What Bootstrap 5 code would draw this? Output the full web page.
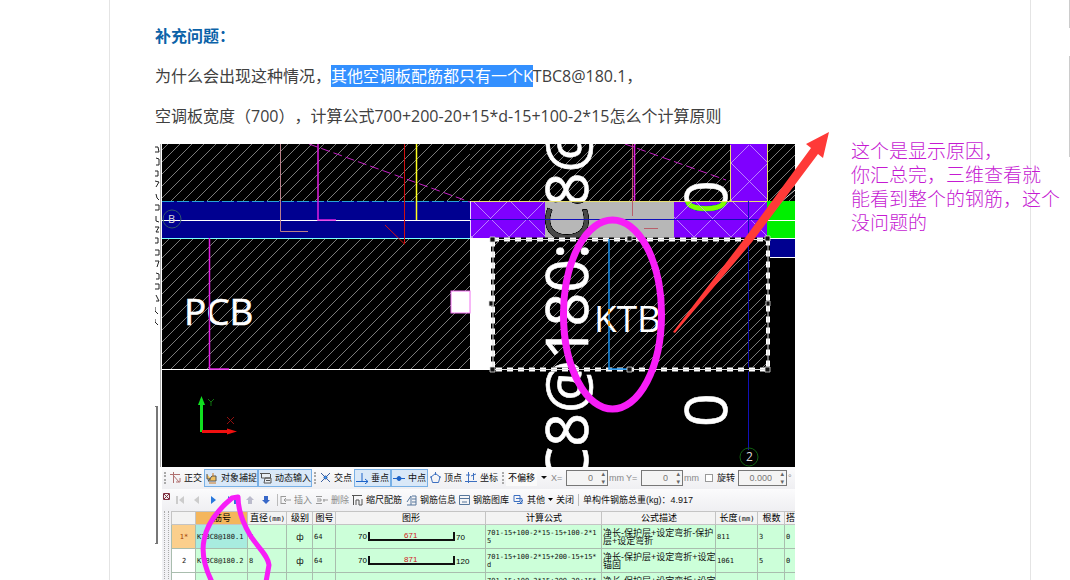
<!DOCTYPE html>
<html lang="zh-CN">
<head>
<meta charset="utf-8">
<meta name="viewport" content="width=device-width, initial-scale=1">
<title>补充问题</title>
<link rel="stylesheet" href="https://cdn.jsdelivr.net/npm/bootstrap@5.3.0/dist/css/bootstrap.min.css">
<style>
  body { font-family: "Open Sans", "Noto Sans CJK SC", sans-serif; font-size: 16px; line-height: 40px; color: #404040; background: #fff; text-spacing-trim: space-all; font-feature-settings: "chws" 0, "halt" 0; }
  .page-shell { height: 100vh; }
  .gutter { width: 109px; }
  .sheet { border: solid #e4e4e4; border-width: 0 1px; padding: 16px 0 0 45px; min-width: 0; }
  .ask-title { font-size: 16px; line-height: 40px; font-weight: 700; color: #0b62a8; }
  .picked { background: #3390ff; color: #fff; }
  .rail { width: 39px; gap: 28px; }
  .rail div { border-right: 1px solid #ccc; height: 28px; }
  .rail div + div { height: 101px; }

  .shot { width: 640px; margin-top: 8px; line-height: 12px; color: #111; font-size: 9px; font-family: "Liberation Sans", "Noto Sans CJK SC", sans-serif; }
  .shot svg { display: block; }
  .cad { width: 100%; font-family: "Open Sans", sans-serif; }
  .blend { mix-blend-mode: difference; }
  .cad-group { isolation: isolate; }
  .marks { left: 0; top: 0; width: 100%; height: auto; overflow: visible; pointer-events: none; }
  .note { left: 696px; top: -6px; width: 215px; font: 300 19px/24px "Noto Sans CJK SC", sans-serif; color: #c51ad2; }

  .panel { margin-left: 7px; background: #f1f1f4; }
  .edge { left: 0; top: -61px; width: 3px; height: 138px; border: solid #777; border-width: 1px 2px 1px 0; }
  .bar { display: grid; align-items: center; height: 22px; white-space: nowrap; background: linear-gradient(#fbfbfc, #efeff2); }
  .bar-snap { grid-template-columns: 6px 36px 54px 54px 6px 36px 37px 37px 35px 37px 6px 44px 16px 42px 17px 16px 42px 18px 37px 49px 8px; }
  .bar-edit { grid-template-columns: 10px 16px 16px 18px 20px 15px 18px 39px 36px 54px 53px 54px 43px 24px 1fr; }
  .grip { height: 12px; width: 2px; margin-left: 2px; border-left: 2px dotted #aaa; }
  .tool { display: flex; align-items: center; gap: 3px; height: 18px; padding: 0 1px; border: 1px solid transparent; background: none; font: inherit; color: #111; }
  .tool svg { flex: none; }
  .tool.on { background: #d9e8f8; border-color: #78b0e6; }
  .tool.off { color: #8a8a8a; }
  .tool.nav-step { justify-content: center; }
  .split { border-left: 1px solid #bbb; }
  .pick { appearance: none; border: 0; background: #fafafa; font: inherit; padding: 0 2px; width: 31px; height: 16px; }
  .num { appearance: textfield; width: 100%; height: 16px; border: 1px solid #777; background: #f4f4f4; color: #777; font: inherit; padding: 0 14px 0 0; text-align: right; }
  .num-box::after { content: "▴\A▾"; white-space: pre; position: absolute; right: 3px; top: 0; font: 7px/8px "DejaVu Sans", sans-serif; color: #666; }
  .unit { color: #888; padding-left: 1px; }
  .tick { appearance: none; width: 8px; height: 8px; border: 1px solid #999; background: #fff; margin: 0; }

  .grid-wrap { padding-left: 9px; overflow: hidden; height: 72px; position: relative; }
  .grid-wrap::before { content: ""; position: absolute; left: 2px; top: 0; bottom: 0; width: 5px; border: dotted #aaa; border-width: 0 1px; }
  .bars { table-layout: fixed; width: 624px; border-collapse: collapse; line-height: 8px; white-space: nowrap; }
  .bars th, .bars td { border: 1px solid #a9bdae; padding: 0 0 0 1px; vertical-align: middle; }
  .bars thead th { height: 13px; background: #f3f3f3; font-weight: 400; text-align: center; border-color: #c4c4c4; color: #000; }
  .bars thead .hot { background: #f4b65c; }
  .bars tbody td { height: 24px; background: #ccffd9; }
  .bars tbody th { background: #fff; font: 7px/8px "DejaVu Sans Mono", monospace; text-align: center; }
  .bars tbody .cur { background: #fbcf8c; color: #a33b00; }
  .bars tbody .cell-on { background: #a8ecdf; }
  .bars .code, .mm { font-family: "DejaVu Sans Mono", monospace; font-size: 7px; }
</style>
</head>
<body>
<div class="page-shell d-flex overflow-hidden">
  <div class="gutter flex-shrink-0"></div>
  <main class="sheet flex-grow-1">
    <h1 class="ask-title m-0">补充问题：</h1>
    <p class="m-0">为什么会出现这种情况，<span class="picked">其他空调板配筋都只有一个K</span>TBC8@180.1，</p>
    <p class="m-0">空调板宽度（700），计算公式700+200-20+15*d-15+100-2*15怎么个计算原则</p>

    <figure class="shot position-relative mb-0">
      <svg class="cad" viewBox="155 144 640 323" role="img" aria-label="CAD">
        <defs>
          <pattern id="hatchL" width="12" height="12" patternUnits="userSpaceOnUse"><path d="M-2 14L14 -2M-2 2L2 -2M10 14L14 10" stroke="#999" stroke-width=".8"/></pattern>
          <pattern id="hatchR" width="10" height="10" patternUnits="userSpaceOnUse"><path d="M-2 12L12 -2M-2 2L2 -2M8 12L12 8" stroke="#999" stroke-width=".8"/></pattern>
          <pattern id="cross" x="731" y="163" width="37" height="37" patternUnits="userSpaceOnUse"><path d="M0 0L37 37M37 0L0 37" stroke="#c9a0ff" stroke-width=".8"/></pattern>
        </defs>
        <!-- ruler at the left edge -->
        <path d="M155 147h3l1 5h-4M156 158l3 1v6h-3M155 171h3v5h-3M155 181l4 1-3 5M156 194l1 4 2 2M155 205h4v5h-4M156 216v5l3 1M155 227h4l-3 5h3M155 238h3v5h-3M155 250h4v5h-4M155 261h4l-2 6M156 273l3 1v5h-3M155 284h4v5h-4M156 295l3 6h-3M155 307v4l3 3M155 319v3l3 3" fill="none" stroke="#222"/>
        <path d="M160.5 144V467" stroke="#aaa"/>
        <g class="cad-group">
          <rect x="162" y="144" width="633" height="323" fill="#000"/>
          <rect x="162" y="144" width="308" height="225" fill="url(#hatchL)"/>
          <rect x="470" y="144" width="325" height="57" fill="url(#hatchR)"/>
          <rect x="493" y="239" width="274" height="130" fill="url(#hatchR)"/>
          <rect x="470" y="201" width="297" height="38" fill="#000"/>
          <g font-size="59" fill="#fff" stroke="#fff" stroke-width=".6">
            <text transform="translate(588 484) rotate(-90)">C8@180:C8@</text>
            <text transform="translate(727 427) rotate(-90)">0</text>
            <text transform="translate(727 214) rotate(-90)">0</text>
          </g>
          <rect class="blend" x="545" y="201" width="129" height="37" fill="#b7b7b7"/>
          <path class="blend" d="M470 201h75v37h-75zM674 201h93v37h-93z" fill="#7f00ff"/>
          <rect x="730" y="144" width="37" height="57" fill="#7f00ff"/>
        </g>
        <path d="M470 201h75v37h-75zM674 201h93v37h-93zM730 145h37v56h-37z" fill="url(#cross)"/>
        <rect x="162" y="201" width="308" height="37" fill="#000090"/>
        <path d="M162 201.500H470" stroke="#27a3d8" stroke-dasharray="12 3"/>
        <path d="M162 220.500H470" stroke="#fff"/>
        <path d="M162 238.500H470" stroke="#7ff"/>
        <path d="M470 201.500H767M730.500 145V201M767.500 144V201" stroke="#e8e070"/>
        <path d="M470.500 201V238" stroke="#e8d8ff"/>
        <rect x="470" y="238" width="23" height="131" fill="#fff"/>
        <path d="M767 201h28v37h-28z" fill="#00f000"/>
        <path d="M767 239h28v18h-28z" fill="#000090"/>
        <path d="M767 220.500h28M767 257.500h28M767 238.500h28M162 369.500H768" stroke="#fff"/>
        <path d="M280.500 144V231.500H308" fill="none" stroke="#b9808a"/>
        <path d="M318 144V220H336M209.500 238V369H229M634.500 144V201" fill="none" stroke="#e01ee0" stroke-width="1.500"/>
        <path d="M632.500 144V216M644 228.500H658" stroke="#b95f6a"/>
        <path d="M309 144L470 202M625 144L726 180" stroke="#c41ec4" stroke-dasharray="9 4"/>
        <path d="M404.500 144V244L385 225" fill="none" stroke="#d01010"/>
        <path d="M416.500 144V220" stroke="#ffff20" stroke-width="1.500"/>
        <path d="M470 219.500H767M748.500 201V450" stroke="#1010b8"/>
        <path d="M781 202L795 190" stroke="#ddd"/>
        <rect x="451" y="291" width="19" height="22" fill="#fff" stroke="#f070f0"/>
        <circle cx="172" cy="219" r="9" fill="none" stroke="#31576a"/>
        <text x="168" y="223" font-size="11" fill="#ddd">B</text>
        <circle cx="749" cy="457" r="9" fill="none" stroke="#106010"/>
        <text x="746" y="461" font-size="12" fill="#ddd">2</text>
        <text x="184" y="325" font-size="37" fill="#fff" stroke="#fff" stroke-width=".5">PCB</text>
        <path d="M209.500 300V325" stroke="#c41ec4"/>
        <path d="M493 239.500H768" stroke="#e8e070"/>
        <path d="M493 239.500H768V369.500H493Z" fill="none" stroke="#000" stroke-width="4"/>
        <path d="M493 239.500H768V369.500H493Z" fill="none" stroke="#fff" stroke-width="4" stroke-dasharray="6 5"/>
        <path d="M493 239.500H768V369.500H493Z" fill="none" stroke="#ddd"/>
        <path d="M609 239V369H627" fill="none" stroke="#1590f0" stroke-width="1.500"/>
        <text x="594" y="332" font-size="37" fill="#fff">KTB</text>
        <path d="M609 309v5M609 321v5" stroke="#f0a020" stroke-width="2"/>
        <path d="M490 237h5v5h-5zM627 236h5v5h-5zM765 236h5v5h-5zM489 301h4v5h-4zM766 301h4v5h-4zM490 367h5v5h-5zM627 367h5v5h-5zM765 367h5v5h-5z" fill="#111" stroke="#ddd" stroke-width=".8"/>
        <!-- axis tripod -->
        <path d="M201.500 432V402" stroke="#10e020" stroke-width="3"/><path d="M198 405l3.500-9 3.500 9z" fill="#10e020"/>
        <path d="M202 431.500H229" stroke="#f01010" stroke-width="3"/><path d="M227 428.500l10 3-10 3z" fill="#f01010"/>
        <path d="M208 399l3 3 3-3M211 402v4" stroke="#107010" fill="none"/>
        <path d="M227 417l7 7M234 417l-7 7" stroke="#901010"/>
      </svg>

      <div class="position-relative">
      <div class="edge position-absolute"></div>
      <div class="panel">
        <div class="bar bar-snap">
          <span class="grip"></span>
          <button class="tool" type="button"><svg width="11" height="12" fill="none" stroke="#b07070"><path d="M0 2.500h10M3.500 0v11M3 3l6 7M6 10h4V6"/></svg>正交</button>
          <button class="tool on" type="button"><svg width="12" height="12" fill="none" stroke="#555"><path d="M1 2v5h4M2 9h8V4H6z" fill="#f0c060"/><path d="M7 1v3M3 11h7" stroke="#d07820"/></svg>对象捕捉</button>
          <button class="tool on" type="button"><svg width="12" height="12" fill="none" stroke="#555"><path d="M0 1.500h10M1.500 1v5h9V2M5 6h6v5H4z" fill="#e8eef4"/><path d="M6 8.500h4"/></svg>动态输入</button>
          <span class="grip"></span>
          <button class="tool" type="button"><svg width="11" height="12" stroke="#3b5fa0" fill="none"><path d="M1 1l9 9M10 1L1 10"/><circle cx="5.500" cy="5.500" r="1.500" fill="#39f"/></svg>交点</button>
          <button class="tool on" type="button"><svg width="12" height="12" stroke="#1d63c8" fill="none"><path d="M6 1v8M0 9.500h12M9 7l3 2.500L9 12"/></svg>垂点</button>
          <button class="tool on" type="button"><svg width="12" height="12" stroke="#1d63c8" fill="#1d63c8"><path d="M0 6.500h12"/><circle cx="6" cy="6.500" r="2"/></svg>中点</button>
          <button class="tool" type="button"><svg width="11" height="12" stroke="#3c6fc0" fill="none"><path d="M5.500 1.500L10 5 8.500 10.500h-6L1 5z"/><path d="M5.500 0v3M0 5h2M9 5h2"/></svg>顶点</button>
          <button class="tool" type="button"><svg width="12" height="12" stroke="#3c6fc0" fill="none"><path d="M3.500 0v11M0 9.500h12M8.500 1v7M6 4l5-2M1 3h4"/></svg>坐标</button>
          <span class="grip"></span>
          <span class="d-flex align-items-center"><select class="pick" aria-label="偏移"><option>不偏移</option></select><svg width="12" height="6"><path d="M4 1h6L7 4z" fill="#111"/></svg></span>
          <label class="unit" for="dx">X=</label>
          <span class="num-box position-relative"><input class="num d-block" id="dx" type="text" value="0"></span>
          <span class="unit">mm</span>
          <label class="unit" for="dy">Y=</label>
          <span class="num-box position-relative"><input class="num d-block" id="dy" type="text" value="0"></span>
          <span class="unit">mm</span>
          <label class="d-flex align-items-center gap-1 ps-1"><input class="tick" type="checkbox">旋转</label>
          <span class="num-box position-relative"><input class="num d-block" type="text" value="0.000" aria-label="旋转"></span>
          <span class="unit">°</span>
        </div>
        <div class="bar bar-edit">
          <svg width="8" height="9" class="mb-2"><path d="M1.500 1.500h6v6h-6zM2 2l5 5M7 2L2 7" stroke="#803040" fill="#eee"/></svg>
          <button class="tool off nav-step" type="button" aria-label="首行"><svg width="8" height="8" fill="#ccc"><path d="M0 0h2v8H0zM8 0v8L3 4z"/></svg></button>
          <button class="tool off nav-step" type="button" aria-label="上一行"><svg width="5" height="8" fill="#ccc"><path d="M5 0v8L0 4z"/></svg></button>
          <button class="tool nav-step" type="button" aria-label="下一行"><svg width="5" height="8" fill="#2878dc"><path d="M0 0v8l5-4z"/></svg></button>
          <button class="tool nav-step" type="button" aria-label="末行"><svg width="8" height="8" fill="#2878dc"><path d="M0 0v8l5-4zM6 0h2v8H6z"/></svg></button>
          <button class="tool off nav-step" type="button" aria-label="上移"><svg width="8" height="8" fill="#bbc"><path d="M4 0l4 4H6v4H2V4H0z"/></svg></button>
          <button class="tool nav-step" type="button" aria-label="下移"><svg width="8" height="8" fill="#3868c8"><path d="M4 8l4-4H6V0H2v4H0z"/></svg></button>
          <button class="tool off" type="button"><svg width="14" height="12" fill="none" stroke="#999"><path d="M.5 0v12" stroke="#bbb"/><path d="M4 2.500h5M4 9.500h5M4 2v8M7 6h7M9 4L7 6l2 2"/></svg>插入</button>
          <button class="tool off" type="button"><svg width="12" height="12" fill="none" stroke="#999"><path d="M0 2.500h6M0 9.500h6M1 5h4v2H1M7 6h5M8 5v3"/></svg>删除</button>
          <button class="tool" type="button"><svg width="11" height="12" fill="none" stroke="#555"><path d="M0 1.500h10M1.500 1v10M4 11V6h3v5h3V5"/></svg>缩尺配筋</button>
          <button class="tool" type="button"><svg width="11" height="12" fill="none" stroke="#57779c"><path d="M1 8l4-6v9M6 2h4v9H1M6 5h4M6 8h4"/></svg>钢筋信息</button>
          <button class="tool" type="button"><svg width="11" height="12" fill="none" stroke="#57779c"><path d="M.5 1.500h10v9H.5zM1 4.500h9M3 8h5"/></svg>钢筋图库</button>
          <button class="tool" type="button"><svg width="11" height="12" fill="none" stroke="#3c6fc0"><path d="M1 1.500h6v6H1zM3 4.500h6v5H4M7 9l3-3"/></svg>其他<svg width="5" height="4"><path d="M0 0h5L2.500 3z"/></svg></button>
          <button class="tool" type="button">关闭</button>
          <span class="split ps-1">单构件钢筋总重(kg)：4.917</span>
        </div>
        <div class="grid-wrap">
          <table class="bars">
            <colgroup><col width="24"><col width="52"><col width="39"><col width="26"><col width="23"><col width="150"><col width="116"><col width="114"><col width="42"><col width="27"><col width="11"></colgroup>
            <thead><tr><th></th><th class="hot">筋号</th><th>直径<span class="mm">(mm)</span></th><th>级别</th><th>图号</th><th>图形</th><th>计算公式</th><th>公式描述</th><th>长度<span class="mm">(mm)</span></th><th>根数</th><th>搭</th></tr></thead>
            <tbody>
              <tr><th class="cur">1*</th><td class="code cell-on">KTBC8@180.1</td><td class="code">8</td><td class="text-center">ф</td><td class="code">64</td>
                <td><svg width="146" height="16"><path d="M32 3v8h85V3" fill="none" stroke="#111" stroke-width="2"/><g font-size="8"><text x="21" y="10">70</text><text x="119" y="11">70</text><text x="67" y="9" fill="#d02020">671</text></g></svg></td>
                <td class="code">701-15+100-2*15-15+100-2*1<br>5</td><td>净长-保护层+设定弯折-保护<br>层+设定弯折</td><td class="code">811</td><td class="code">3</td><td class="code">0</td></tr>
              <tr><th>2</th><td class="code">KTBC8@180.2</td><td class="code">8</td><td class="text-center">ф</td><td class="code">64</td>
                <td><svg width="146" height="16"><path d="M32 3v8h85V3" fill="none" stroke="#111" stroke-width="2"/><g font-size="8"><text x="21" y="10">70</text><text x="119" y="11">120</text><text x="67" y="9" fill="#d02020">871</text></g></svg></td>
                <td class="code">701-15+100-2*15+200-15+15*<br>d</td><td>净长-保护层+设定弯折+设定<br>锚固</td><td class="code">1061</td><td class="code">5</td><td class="code">0</td></tr>
              <tr><th></th><td></td><td></td><td></td><td></td>
                <td><svg width="146" height="16"><path d="M32 3v8h85V3" fill="none" stroke="#111" stroke-width="2"/></svg></td>
                <td class="code">701-15+100-2*15+200-20+15*<br>d</td><td>净长-保护层+设定弯折+设定<br>锚固</td><td></td><td></td><td></td></tr>
            </tbody>
          </table>
        </div>
      </div>
      </div>

      <!-- hand-drawn marks over the capture -->
      <svg class="marks position-absolute" viewBox="155 144 640 436" aria-hidden="true">
        <g fill="none" stroke="#f71df7" stroke-linecap="round" stroke-linejoin="round">
          <ellipse cx="612.500" cy="314.500" rx="49" ry="94.500" stroke-width="7"/>
          <path d="M212 582C205 568 201 555 204 540C207 523 220 508 232 498L238 497C238 510 243 523 250 535C258 548 268 555 269 565L266 582" stroke-width="5"/>
        </g>
        <path d="M829 132L823 158L818 154L752 242L675 333L673 332L745 238L811 148L806 144Z" fill="#ff3a38"/>
      </svg>
      <figcaption class="note position-absolute">这个是显示原因，<br>你汇总完，三维查看就<br>能看到整个的钢筋，这个<br>没问题的</figcaption>
    </figure>
  </main>
  <aside class="rail flex-shrink-0 d-flex flex-column"><div></div><div></div></aside>
</div>
<script src="https://cdn.jsdelivr.net/npm/bootstrap@5.3.0/dist/js/bootstrap.bundle.min.js"></script>
</body>
</html>
